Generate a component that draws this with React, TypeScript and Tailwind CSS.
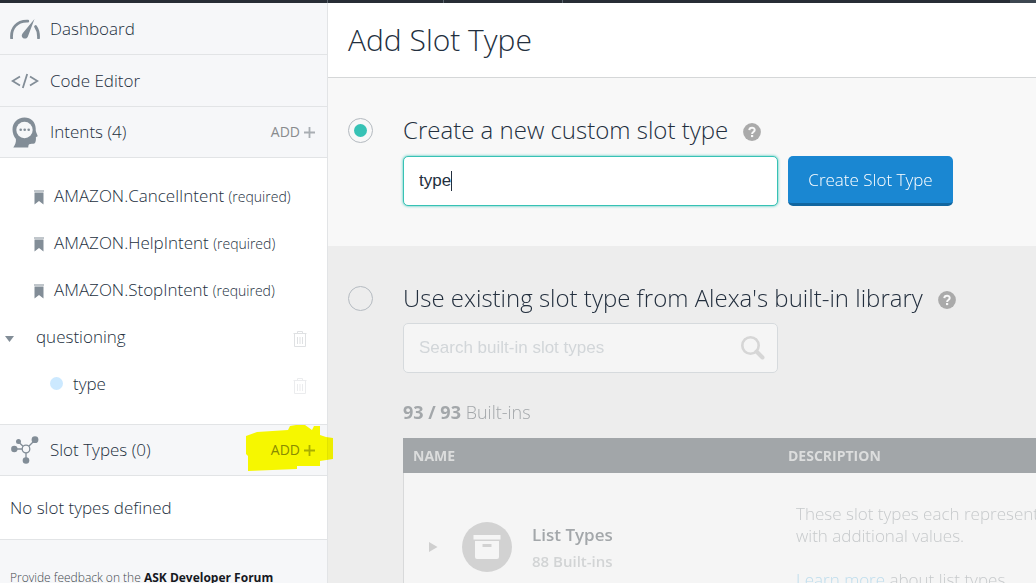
import { useState, type ReactNode } from 'react';

function GaugeIcon() {
  return (
    <svg viewBox="0 0 30 20" className="h-5 w-[30px]" fill="none" aria-hidden="true">
      <path d="M1.600 19.200C.8 9.500 6.500 1.800 17.800 2.200" stroke="#828d97" strokeWidth="2.800" strokeLinecap="round" />
      <path d="M25.600 7.600c2.200 3 3.100 6.600 2.900 11.400" stroke="#828d97" strokeWidth="2.800" strokeLinecap="round" />
      <path d="M24.500 0 17.800 17.700c-1.300 3-6.500 2.200-6-1.500.1-.7.5-1.300.9-2z" fill="#828d97" />
    </svg>
  );
}

function CodeIcon() {
  return (
    <svg viewBox="0 0 28 16" className="h-4 w-7" fill="none" stroke="#828d97" strokeWidth="1.8" aria-hidden="true">
      <path d="M9 3.500 1.600 8 9 12.500M19 3.500 26.400 8 19 12.500M16.200 1 11.800 15" />
    </svg>
  );
}

function HeadIcon() {
  return (
    <svg viewBox="0 0 26 31" className="h-[31px] w-[26px]" aria-hidden="true">
      <path
        d="M12.500.5C19 .5 23.500 5 23.700 11.200c0 2 .1 3 .6 4.300l1.200 3c.3.800 0 1.200-1.600 1.600.2 3-.1 5.700-1.500 6.300-1.300.5-3.900.2-5.200.8-.8.5-.8 2-1 3.300H1.300c1.800-2.800 3-5.300 2.600-8.500C1.800 19.600.5 16 .5 12.500.5 5.800 5.500.5 12.500.5Z"
        fill="#828d97"
      />
      <circle cx="12.500" cy="13" r="8.200" fill="#f6f7f9" />
      <circle cx="8.700" cy="12.800" r="1.300" fill="#828d97" />
      <circle cx="12.700" cy="12.800" r="1.300" fill="#828d97" />
      <circle cx="16.700" cy="12.800" r="1.300" fill="#828d97" />
    </svg>
  );
}

function NodesIcon() {
  return (
    <svg viewBox="0 0 28 28" className="size-7" aria-hidden="true">
      <path d="M3 13h12M7 5.500l8 7.500 9-9M15 13v12" stroke="#828d97" strokeWidth="1.300" fill="none" />
      <circle cx="15" cy="13" r="3.800" fill="#f6f7f9" stroke="#828d97" strokeWidth="1.300" />
      <circle cx="3.300" cy="13" r="3.200" fill="#828d97" />
      <circle cx="7.500" cy="5.500" r="2.500" fill="#828d97" />
      <circle cx="24" cy="3.700" r="3.400" fill="#828d97" />
      <circle cx="15" cy="24.500" r="3.300" fill="#828d97" />
    </svg>
  );
}

function BookmarkIcon() {
  return (
    <svg viewBox="0 0 10 15" className="mt-1 h-[15px] w-2.5" fill="#828d97" aria-hidden="true">
      <path d="M0 .5h10v1H0zM.5 2.500h9V14.500L5 11 .5 14.500z" />
    </svg>
  );
}

function TrashIcon() {
  return (
    <svg viewBox="0 0 14 16" className="mt-1 h-4 w-3.5" fill="none" stroke="#dfe1e3" aria-hidden="true">
      <path d="M.5 2.500h13M1.500 3v12.500h11V3M4.500 2V.5h5V2M4.500 6v7M7 6v7M9.500 6v7" />
    </svg>
  );
}

function PlusIcon() {
  return (
    <svg viewBox="0 0 11 11" className="size-[11px]" stroke="#a9aeb3" strokeWidth="1.800" aria-hidden="true">
      <path d="M5.500 0v11M0 5.500h11" />
    </svg>
  );
}

function HelpIcon() {
  return (
    <button type="button" aria-label="Help" className="mt-1 size-[18px]">
      <svg viewBox="0 0 18 18" className="size-[18px]" aria-hidden="true">
        <circle cx="9" cy="9" r="8.900" fill="#aaaaaa" />
        <path d="M6.300 7.100C6.400 3.800 11.800 3.900 11.700 7c0 2-2.600 1.900-2.600 3.900" fill="none" stroke="#f8f8f8" strokeWidth="2" />
        <path d="M8 12h2.200v2.100H8z" fill="#f8f8f8" />
      </svg>
    </button>
  );
}

function SectionRow({ icon, label, add, highlight }: { icon: ReactNode; label: string; add?: boolean; highlight?: boolean }) {
  return (
    <div className="relative border-b border-[#e2e4e6] bg-[#f6f7f9] pr-3 pl-2.5">
      <div className={add ? 'flex h-[50px] items-center' : 'flex h-[51px] items-center'}>
        <div className="flex w-[30px] shrink-0 items-center justify-center">{icon}</div>
        <a href="#" className="ml-2.5 flex-1">{label}</a>
        {add && (
          <button type="button" className="flex items-center gap-1 text-sm font-normal text-[#888b8d]">
            ADD <PlusIcon />
          </button>
        )}
      </div>
      {highlight && (
        <svg
          viewBox="0 0 87 46"
          className="pointer-events-none absolute top-0 -right-1.5 z-10 h-[46px] w-[87px] mix-blend-multiply"
          fill="#ffff00"
          aria-hidden="true"
        >
          <path d="M0 11 11 7l31-2 2-4 6-1h9l7 5 2-4h6v9l6 2 7 1v21l-13 2v5H51v3l-49 2V31L0 29z" />
        </svg>
      )}
    </div>
  );
}

function RequiredIntent({ name }: { name: string }) {
  return (
    <li className="flex h-[47px] items-center pl-[34px]">
      <BookmarkIcon />
      <span className="ml-2.5 whitespace-nowrap">
        {name} <span className="text-sm">(required)</span>
      </span>
    </li>
  );
}

function Sidebar() {
  return (
    <nav className="w-[328px] shrink-0 border-r border-[#e2e4e6] bg-[#f6f7f9] text-[17px]">
      <SectionRow icon={<GaugeIcon />} label="Dashboard" />
      <SectionRow icon={<CodeIcon />} label="Code Editor" />
      <SectionRow icon={<HeadIcon />} label="Intents (4)" add />
      <ul className="border-b border-[#e2e4e6] bg-white pt-3.5 pb-[17px]">
        <RequiredIntent name="AMAZON.CancelIntent" />
        <RequiredIntent name="AMAZON.HelpIntent" />
        <RequiredIntent name="AMAZON.StopIntent" />
        <li className="flex h-[47px] items-center pr-5 pl-[5px]">
          <button type="button" aria-label="Collapse questioning">
            <svg viewBox="0 0 10 6" className="mt-1 h-1.5 w-2.5" fill="#828d97" aria-hidden="true">
              <path d="M0 0h9L4.500 6z" />
            </svg>
          </button>
          <a href="#" className="ml-[21px] flex-1">questioning</a>
          <button type="button" aria-label="Delete questioning"><TrashIcon /></button>
        </li>
        <li className="flex h-[47px] items-center pr-5 pl-[50px]">
          <span className="size-[13px] rounded-full bg-[#cce9ff]" />
          <a href="#" className="ml-2.5 flex-1">type</a>
          <button type="button" aria-label="Delete type" className="opacity-60"><TrashIcon /></button>
        </li>
      </ul>
      <SectionRow icon={<NodesIcon />} label="Slot Types (0)" add highlight />
      <p className="flex h-16 items-center border-b border-[#e2e4e6] bg-white pl-2.5">No slot types defined</p>
      <p className="pt-7 pl-2.5 text-xs leading-5 text-[#41474d]">
        Provide feedback on the <a href="#" className="font-bold text-[#16191f]">ASK Developer Forum</a>
      </p>
    </nav>
  );
}

const radioClass =
  "flex size-[25px] shrink-0 cursor-pointer appearance-none items-center justify-center rounded-full border border-[#b4bac0] before:size-[13px] before:rounded-full checked:before:bg-[#37c2b5]";

export default function App() {
  const [mode, setMode] = useState('custom');
  const [name, setName] = useState('type');

  return (
    <div className="flex h-screen flex-col overflow-hidden bg-white font-['Open_Sans',sans-serif] font-light text-[#232f3e]">
      <div className="flex h-[3px] shrink-0 bg-[#272d35]">
        <span className="w-[328px] border-r border-[#59636c]" />
        <span className="w-[116px] border-r border-[#59636c]" />
        <span className="w-[119px] border-r border-[#59636c]" />
        <span className="ml-auto w-[26px] bg-[#3d4751]" />
      </div>
      <div className="flex min-h-0 flex-1">
        <Sidebar />
        <main className="min-w-0 flex-1 overflow-hidden bg-[#ededed]">
          <header className="flex h-[75px] items-center border-b border-[#d5d7d8] bg-white pb-0.5 pl-5">
            <h1 className="text-[30px]">Add Slot Type</h1>
          </header>

          <section className="flex h-[168px] gap-[30px] bg-[#f8f8f8] pt-10 pl-5">
            <input id="custom" type="radio" name="mode" checked={mode === 'custom'} onChange={() => setMode('custom')} className={radioClass} />
            <div>
              <div className="flex h-6 items-center gap-[15px]">
                <label htmlFor="custom" className="text-2xl leading-6 whitespace-nowrap">Create a new custom slot type</label>
                <HelpIcon />
              </div>
              <div className="mt-3.5 flex gap-2.5">
                <label className="flex h-[50px] w-[375px] cursor-text items-center rounded-[5px] border border-[#37c2b5] bg-white pl-[15px] shadow-[0_0_3px_#37c2b5]">
                  <input
                    aria-label="Slot type name"
                    autoFocus
                    value={name}
                    onChange={(e) => setName(e.target.value)}
                    className="peer field-sizing-content max-w-[340px] font-['Liberation_Sans',sans-serif] text-[17px] font-normal caret-transparent outline-none"
                  />
                  <span className="h-5 w-px bg-[#232f3e]" />
                </label>
                <button type="button" className="h-[50px] w-[165px] rounded-[5px] border-b-[3px] border-[#1166a0] bg-[#1a87d2] text-[17px] font-light text-white">
                  Create Slot Type
                </button>
              </div>
            </div>
          </section>

          <section className="flex gap-[30px] pt-10 pl-5">
            <input id="existing" type="radio" name="mode" checked={mode === 'existing'} onChange={() => setMode('existing')} className={radioClass} />
            <div className="min-w-0 flex-1">
              <div className="flex h-6 items-center gap-[15px]">
                <label htmlFor="existing" className="text-2xl leading-6 whitespace-nowrap">Use existing slot type from Alexa's built-in library</label>
                <HelpIcon />
              </div>
              <div className="mt-[13px] flex h-[50px] w-[375px] items-center rounded-[5px] border border-[#d6dadd] bg-[#f5f5f5] px-[15px]">
                <input
                  aria-label="Search built-in slot types"
                  placeholder="Search built-in slot types"
                  className="min-w-0 flex-1 bg-transparent font-['Liberation_Sans',sans-serif] text-[17px] font-normal outline-none placeholder:text-[#d2d6d9]"
                />
                <svg viewBox="0 0 24 24" className="mr-[-3px] size-6" fill="none" stroke="#d6d6d6" aria-hidden="true">
                  <circle cx="9.500" cy="9.500" r="8.200" strokeWidth="2.600" />
                  <path d="m15.500 15.500 6 6" strokeWidth="4" strokeLinecap="round" />
                </svg>
              </div>
              <p className="mt-[25px] h-10 text-lg text-[#a3a7aa]"><b className="font-bold">93 / 93</b> Built-ins</p>
              <table className="w-[900px] table-fixed border-separate border-spacing-0 text-left">
                <thead>
                  <tr className="h-[35px] bg-[#a2a6a9] text-sm text-[#dcdddd]">
                    <th className="w-[385px] pl-2.5 font-bold">NAME</th>
                    <th className="font-bold">DESCRIPTION</th>
                  </tr>
                </thead>
                <tbody>
                  <tr className="bg-[#f5f5f5]">
                    <td className="h-[148px] border-l border-[#d8d9da] pl-[25px]">
                      <div className="flex items-center">
                        <button type="button" aria-label="Expand List Types">
                          <svg viewBox="0 0 9 10" className="h-2.5 w-[9px]" fill="#cfcfcf" aria-hidden="true"><path d="M0 0v10l8.500-5z" /></svg>
                        </button>
                        <svg viewBox="0 0 50 50" className="ml-6 size-[50px]" aria-hidden="true">
                          <circle cx="25" cy="25" r="25" fill="#d2d2d2" />
                          <path d="M11.500 13h27v4.500h-27zM13 19h24v16q0 2-2 2H15q-2 0-2-2z" fill="#f5f5f5" />
                          <path d="M20.500 22h9v3h-9z" fill="#d2d2d2" />
                        </svg>
                        <div className="ml-5">
                          <div className="text-[17px] leading-7 font-semibold text-[#a3a7aa]">List Types</div>
                          <div className="text-[15px] leading-6 font-semibold text-[#d2d4d5]">88 Built-ins</div>
                        </div>
                      </div>
                    </td>
                    <td className="pl-2 align-top text-[17px] leading-[22px] text-[#c6c9cb]">
                      <p className="pt-[30px] whitespace-nowrap">These slot types each represent<br />with additional values.</p>
                      <p className="mt-[22px]"><a href="#" className="text-[#bddcec]">Learn more</a> about list types.</p>
                    </td>
                  </tr>
                </tbody>
              </table>
            </div>
          </section>
        </main>
      </div>
    </div>
  );
}
